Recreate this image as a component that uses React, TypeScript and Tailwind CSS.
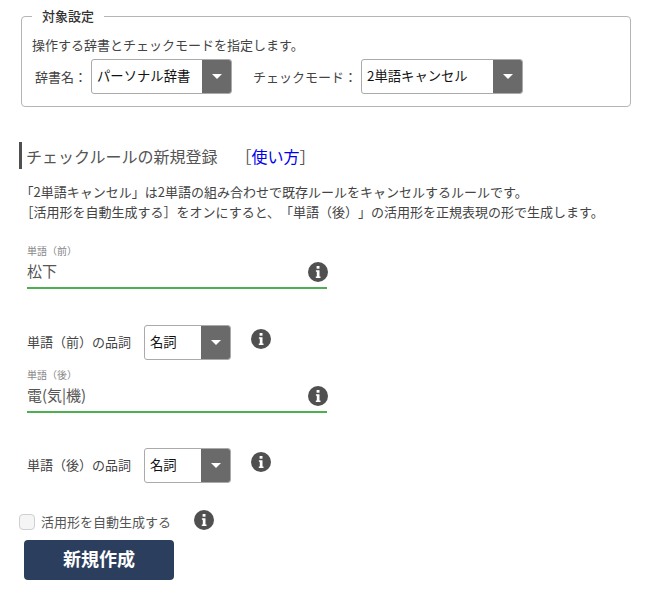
import React from "react";

const Info = ({ className = "" }: { className?: string }) => (
  <svg viewBox="0 0 20 20" className={`w-5 h-5 shrink-0 ${className}`}>
    <circle cx="10" cy="10" r="10" fill="#505050" />
    <rect x="8.6" y="4" width="2.9" height="2.7" fill="#fff" />
    <path d="M7.9 8.2h3.6v6.3h1v1.5H7.8v-1.5h1v-4.8h-.9z" fill="#fff" />
  </svg>
);

const Select = ({ text, width }: { text: string; width: string }) => (
  <div className={`flex h-[35px] ${width} rounded-[3px] border border-[#aaaaaa] bg-white overflow-hidden shrink-0`}>
    <div className="flex-1 pl-[5px] pb-[1px] flex items-center text-[#111] text-[13.33px] whitespace-nowrap">{text}</div>
    <div className="w-[29px] bg-[#6a6a6a] flex items-center justify-center">
      <div className="w-0 h-0 border-l-[5.5px] border-r-[5.5px] border-t-[5.5px] border-l-transparent border-r-transparent border-t-white" />
    </div>
  </div>
);

const Field = ({ label, value, className = "" }: { label: string; value: string; className?: string }) => (
  <div className={`w-[300px] h-[45px] border-b-2 border-[#4caf50] flex flex-col relative ${className}`}>
    <div className="text-[10px] leading-[14px] text-[#888]">{label}</div>
    <div className="text-[15px] leading-[22px] mt-[2px] text-[#555]">{value}</div>
    <Info className="absolute right-[-1px] top-[18px]" />
  </div>
);

const PosRow = ({ label, className = "" }: { label: string; className?: string }) => (
  <div className={`flex items-start ${className}`}>
    <div className="w-[117px] text-[13px] leading-[18px] mt-[8px] text-[#444] whitespace-nowrap">{label}</div>
    <Select text="名詞" width="w-[87px]" />
    <Info className="ml-5 mt-1" />
  </div>
);

export default function App() {
  return (
    <div
      className="w-[660px] h-[603px] bg-white overflow-hidden pl-[21px] pr-[29px] [text-spacing-trim:space-all]"
      style={{ fontFamily: '"Noto Sans CJK JP", "Noto Sans", sans-serif' }}
    >
      <fieldset className="mt-[8px] h-[99px] border border-[#b5b5b5] rounded-[4px] pl-[10px] pr-2 pt-[12px]">
        <legend className="px-[10px] text-[13px] leading-[16px] font-medium text-[#333]">対象設定</legend>
        <div className="text-[13px] leading-[18px] text-[#444]">操作する辞書とチェックモードを指定します。</div>
        <div className="flex items-center mt-[5px] pl-[3px]">
          <span className="w-[56px] text-[13px] text-[#444] whitespace-nowrap">辞書名：</span>
          <Select text="パーソナル辞書" width="w-[141px]" />
          <span className="ml-[21px] w-[108px] text-[13px] text-[#444] whitespace-nowrap">チェックモード：</span>
          <Select text="2単語キャンセル" width="w-[162px]" />
        </div>
      </fieldset>

      <div className="ml-[-2px] mt-[35px] h-[27px] border-l-[3px] border-[#505050] pl-[4px] flex items-center text-[16px] text-[#555] whitespace-nowrap">
        <span>チェックルールの新規登録</span>
        <span className="ml-[18px]">［<span className="text-[#0000ee]">使い方</span>］</span>
      </div>

      <div className="ml-[-0.5px] mt-[13px] text-[13px] leading-[20px] text-[#444] whitespace-nowrap">
        <div>「2単語キャンセル」は2単語の組み合わせで既存ルールをキャンセルするルールです。</div>
        <div>［活用形を自動生成する］をオンにすると、「単語（後）」の活用形を正規表現の形で生成します。</div>
      </div>

      <div className="ml-[6px]">
        <Field label="単語（前）" value="松下" className="mt-[22px]" />
        <PosRow label="単語（前）の品詞" className="mt-[36px]" />
        <Field label="単語（後）" value="電(気|機)" className="mt-[8px]" />
        <PosRow label="単語（後）の品詞" className="mt-[35px]" />
      </div>

      <div className="flex items-start ml-[-2px] mt-[27px]">
        <div className="w-4 h-4 mt-[4px] rounded-[4px] border-[1.5px] border-[#cfcfcf] bg-[#f5f5f5]" />
        <span className="ml-[6px] mt-[3px] text-[13px] leading-[18px] text-[#555] whitespace-nowrap">活用形を自動生成する</span>
        <Info className="ml-[23px]" />
      </div>

      <button className="block ml-[3px] mt-[9px] w-[150px] h-[40px] pb-[3px] rounded-[4px] bg-[#2c3e5d] text-white text-[18px] font-bold">
        新規作成
      </button>
    </div>
  );
}
